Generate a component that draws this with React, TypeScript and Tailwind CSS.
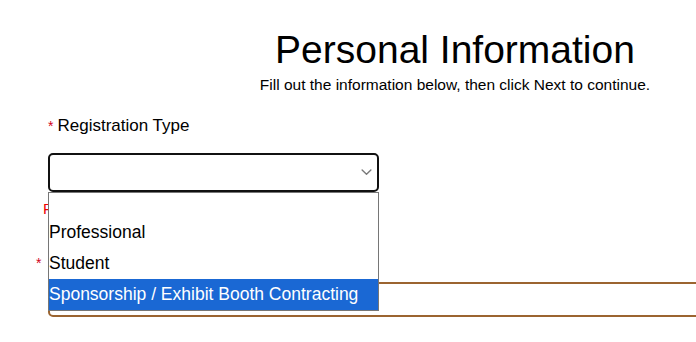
// Registration form — "Personal Information" step with the type dropdown open.

const OPTIONS = ["", "Professional", "Student", "Sponsorship / Exhibit Booth Contracting"]
const SELECTED = 3

function Chevron() {
  return (
    <svg viewBox="0 0 12 8" className="w-[11px] h-[7px]" fill="none" aria-hidden>
      <path d="M1 1.2 L6 6 L11 1.2" stroke="#7a7a7a" strokeWidth="1.6" strokeLinecap="round" strokeLinejoin="round" />
    </svg>
  )
}

function RequiredMark() {
  return <span className="text-[14px] leading-[24px] text-[#d0021b] mr-[4px]">*</span>
}

export default function App() {
  return (
    <div className="w-[696px] h-[342px] overflow-hidden bg-white text-black font-['Liberation_Sans',Arial,sans-serif]">
      <div className="w-[910px] px-[48px] pt-[27px]">

        {/* Heading */}
        <h1 className="text-center text-[39px] leading-[45px] font-normal">Personal Information</h1>
        <p className="mt-[3px] text-center text-[15.5px] leading-[20px]">
          Fill out the information below, then click Next to continue.
        </p>

        {/* Registration type */}
        <div className="mt-[19px] flex items-start">
          <RequiredMark />
          <span className="text-[17px] leading-[24px]">Registration Type</span>
        </div>

        <div className="relative mt-[15px] w-[331px]">
          <div className="h-[39px] border-2 border-[#111] rounded-[5px] flex items-center justify-end pr-[5px]">
            <Chevron />
          </div>

          {/* Open native-style option list */}
          <div className="absolute left-0 top-full z-10 w-[331px] bg-white border border-[#767676] flex flex-col">
            {OPTIONS.map((o, i) => (
              <div
                key={i}
                className={`${i === 0 ? "h-[24px]" : "h-[31px]"} text-[17.5px] leading-[31px] whitespace-nowrap ${
                  i === SELECTED ? "bg-[#1a68d4] text-white" : "text-black"
                }`}
              >
                {o}
              </div>
            ))}
          </div>
        </div>

        <p className="mt-[7px] -ml-[5px] text-[15px] leading-[20px] text-[#e00]">Required</p>

        {/* Next field, mostly hidden behind the list */}
        <div className="mt-[32px] -ml-[12px] flex items-start">
          <RequiredMark />
        </div>
        <div className="mt-[7px] h-[35px] border-2 border-[#9b6430] rounded-[5px]" />
      </div>
    </div>
  )
}
